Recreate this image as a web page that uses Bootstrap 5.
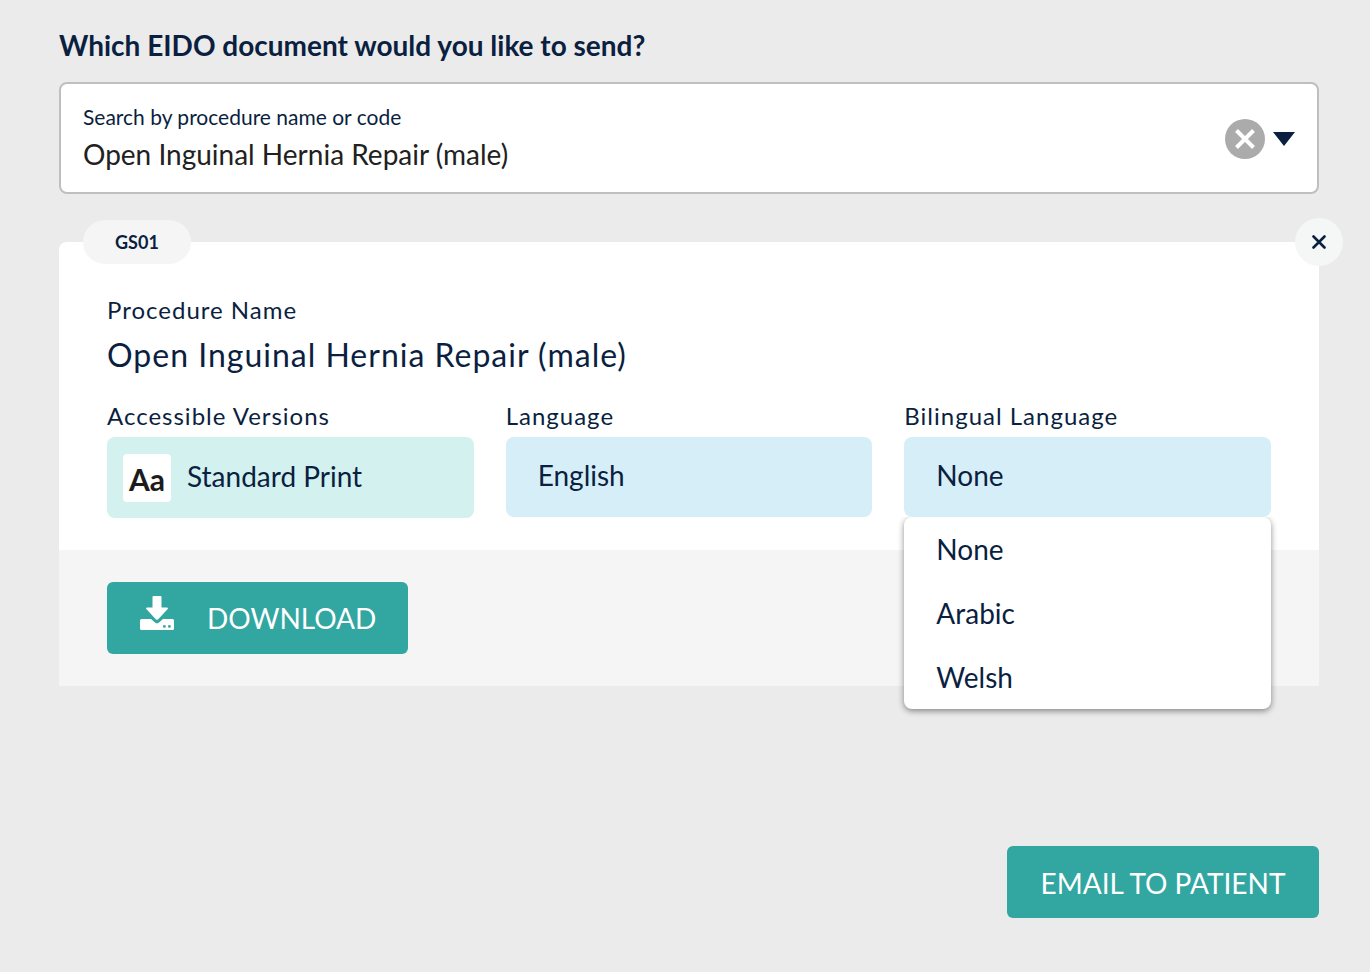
<!DOCTYPE html>
<html lang="en">
<head>
<meta charset="utf-8">
<meta name="viewport" content="width=device-width, initial-scale=1">
<title>Send an EIDO document</title>
<link href="https://cdn.jsdelivr.net/npm/bootstrap@5.3.0/dist/css/bootstrap.min.css" rel="stylesheet">
<style>
  :root { --navy: #0b1f41; --teal: #32a6a1; }
  body { background: #ebebeb; color: var(--navy); font-family: Lato, "Liberation Sans", sans-serif; font-size: 28px; line-height: 40px; }
  .page { padding: 24px 51px 54px 59px; }
  .page-title { font-size: 28px; line-height: 42px; }
  .search-box { border: 2px solid #bfbfbf; border-radius: 8px; padding: 18px 22px 16px; }
  .search-box label { font-size: 21px; line-height: 30px; }
  .search-box input { height: 44px; font-size: 28px; line-height: 44px; color: #212121; }
  .round-btn { width: 40px; height: 40px; background: #ababab; }
  .doc-card { border-radius: 8px; margin-top: 48px; }
  .code-pill { left: 24px; top: -22px; padding: 0 32px; font-size: 18px; line-height: 44px; background: #f5f5f5; }
  .close-btn { right: -24px; top: -24px; width: 48px; height: 48px; background: #f5f6f6; }
  .doc-body { padding: 50px 48px 32px; }
  .field-label { font-size: 24px; line-height: 36px; letter-spacing: 1px; }
  .doc-name { font-size: 32px; line-height: 54px; letter-spacing: 1px; }
  .pickers { gap: 32px; }
  .pickers .field-label { margin-bottom: 3px; }
  .picker { height: 80px; border-radius: 8px; background-color: #d6eef8; }
  .picker select { font-size: 28px; line-height: 40px; color: var(--navy); background: none; height: 100%; padding: 0 32px 4px; }
  .picker-mint { height: 81px; background-color: #d3f1ee; padding-left: 16px; }
  .picker-mint select { padding-left: 16px; }
  .print-icon { width: 48px; height: 48px; font-size: 30px; line-height: 50px; border-radius: 4px; color: #1c1c1c; }
  .option-menu { top: 100%; left: 0; right: 0; border-radius: 8px; box-shadow: 0 2px 6px rgba(0,0,0,.45); clip-path: inset(0 -12px -12px -12px); }
  .option-menu button { font-size: 28px; line-height: 64px; padding: 0 32px; color: var(--navy); }
  .doc-foot { background: #f5f5f5; padding: 32px 48px; }
  .btn-teal { --bs-btn-color: #fff; --bs-btn-bg: var(--teal); --bs-btn-border-color: var(--teal); --bs-btn-hover-color: #fff; --bs-btn-hover-bg: #2b918d;
    height: 72px; padding: 0 32px; border: 0; border-radius: 6px; font-size: 28px; line-height: 74px; }
  .btn-teal svg { margin-bottom: 10px; }
  .send-row { margin-top: 160px; }
  .send-row .btn { min-width: 312px; }
</style>
</head>
<body>
<main class="page">
  <h1 class="page-title fw-bold mb-3">Which EIDO document would you like to send?</h1>

  <div class="search-box bg-white d-flex align-items-center">
    <div class="flex-grow-1">
      <label for="procedure" class="d-block">Search by procedure name or code</label>
      <input id="procedure" type="text" class="form-control border-0 rounded-0 p-0 bg-transparent shadow-none" value="Open Inguinal Hernia Repair (male)">
    </div>
    <button type="button" class="round-btn btn border-0 rounded-circle p-0 d-flex align-items-center justify-content-center" aria-label="Clear">
      <svg width="20" height="20" viewBox="0 0 20 20" stroke="#fff" stroke-width="4"><path d="M1.5 1.5l17 17M18.5 1.5l-17 17"/></svg>
    </button>
    <button type="button" class="btn border-0 p-0 ms-2 d-flex" aria-label="Show procedures">
      <svg width="22" height="14" viewBox="0 0 22 14" fill="#0b1f41"><path d="M0 0h22L11 14z"/></svg>
    </button>
  </div>

  <section class="doc-card bg-white position-relative">
    <span class="code-pill position-absolute rounded-pill fw-bold">GS01</span>
    <button type="button" class="close-btn btn border-0 p-0 rounded-circle position-absolute d-flex align-items-center justify-content-center" aria-label="Close">
      <svg width="14" height="14" viewBox="0 0 14 14" stroke="#0b1f41" stroke-width="2.6" stroke-linecap="round"><path d="M1.5 1.5l11 11M12.5 1.5l-11 11"/></svg>
    </button>

    <div class="doc-body">
      <div class="field-label">Procedure Name</div>
      <h2 class="doc-name fw-normal mb-3">Open Inguinal Hernia Repair (male)</h2>
      <div class="pickers d-flex">
        <div class="flex-fill w-100">
          <label class="field-label d-block" for="version">Accessible Versions</label>
          <div class="picker picker-mint d-flex align-items-center">
            <span class="print-icon bg-white fw-bold text-center flex-shrink-0">Aa</span>
            <select id="version" class="form-select border-0 shadow-none"><option>Standard Print</option></select>
          </div>
        </div>
        <div class="flex-fill w-100">
          <label class="field-label d-block" for="language">Language</label>
          <div class="picker">
            <select id="language" class="form-select border-0 shadow-none"><option>English</option></select>
          </div>
        </div>
        <div class="flex-fill w-100">
          <label class="field-label d-block" for="bilingual">Bilingual Language</label>
          <div class="picker position-relative">
            <select id="bilingual" class="form-select border-0 shadow-none"><option>None</option><option>Arabic</option><option>Welsh</option></select>
            <div class="option-menu position-absolute bg-white z-3" role="listbox" aria-label="Bilingual Language">
              <button type="button" role="option" class="btn border-0 rounded-0 d-block w-100 text-start">None</button>
              <button type="button" role="option" class="btn border-0 rounded-0 d-block w-100 text-start">Arabic</button>
              <button type="button" role="option" class="btn border-0 rounded-0 d-block w-100 text-start">Welsh</button>
            </div>
          </div>
        </div>
      </div>
    </div>

    <div class="doc-foot">
      <button type="button" class="btn btn-teal d-inline-flex align-items-center">
        <svg width="36" height="36" viewBox="0 0 36 36" fill="#fff"><path d="M14.500 1h7q1 0 1 1v10.500h5.500q1.600.2.700 1.500l-9.500 10.200q-1.200 1.200-2.400 0L7.300 14q-.9-1.300.7-1.500h5.500V2q0-1 1-1z"/><path fill-rule="evenodd" d="M2.500 24h9.500l4 3.600q2 1.600 4 0L24 24h9.500q1.500 0 1.500 1.500v8q0 1.500-1.500 1.500h-31Q1 35 1 33.500v-8Q1 24 2.500 24zM25.400 30a1.400 1.400 0 1 0 0 2.800 1.400 1.400 0 0 0 0-2.800zm5 0a1.400 1.400 0 1 0 0 2.800 1.400 1.400 0 0 0 0-2.800z"/></svg>
        <span class="ps-4 ms-2">DOWNLOAD</span>
      </button>
    </div>
  </section>

  <div class="send-row d-flex justify-content-end">
    <button type="button" class="btn btn-teal">EMAIL TO PATIENT</button>
  </div>
</main>
<script src="https://cdn.jsdelivr.net/npm/bootstrap@5.3.0/dist/js/bootstrap.bundle.min.js"></script>
</body>
</html>
